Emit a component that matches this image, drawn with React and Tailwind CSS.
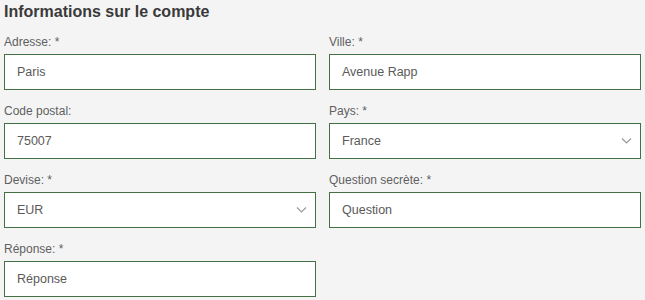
import React from "react";

function Chevron() {
  return (
    <svg width="11" height="7" viewBox="0 0 11 7" className="absolute right-[8px] top-1/2 -translate-y-1/2">
      <path d="M1 1 L5.5 5.5 L10 1" fill="none" stroke="#9a9a9a" strokeWidth="1.2" />
    </svg>
  );
}

function Field({ label, value, select }) {
  return (
    <div className="flex flex-col">
      <label className="text-[12px] leading-[14px] text-[#5f5f5f] h-[15px] mb-[4px]">{label}</label>
      <div className="relative h-[36px] bg-white border border-[#456f45] flex items-center pl-[12px]">
        <span className="text-[12.5px] text-[#5a5a5a]">{value}</span>
        {select && <Chevron />}
      </div>
    </div>
  );
}

export default function App() {
  return (
    <div
      className="w-[645px] h-[300px] bg-[#f4f4f4] px-[4px] overflow-hidden"
      style={{ fontFamily: '"Liberation Sans", Arial, sans-serif' }}
    >
      <h2 className="text-[16px] font-bold text-[#3a3a3a] pt-[2px] h-[35px] leading-[20px]">Informations sur le compte</h2>
      <div className="grid grid-cols-[312px_312px] gap-x-[13px] gap-y-[14px]">
        <Field label="Adresse: *" value="Paris" />
        <Field label="Ville: *" value="Avenue Rapp" />
        <Field label="Code postal:" value="75007" />
        <Field label="Pays: *" value="France" select />
        <Field label="Devise: *" value="EUR" select />
        <Field label="Question secrète: *" value="Question" />
        <Field label="Réponse: *" value="Réponse" />
      </div>
    </div>
  );
}
